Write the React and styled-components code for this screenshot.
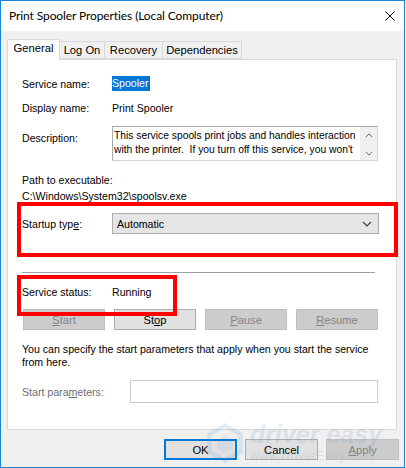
import React from "react";
import styled, { createGlobalStyle } from "styled-components";

const GlobalStyle = createGlobalStyle`
  html, body {
    margin: 0;
    padding: 0;
    background: #ffffff;
  }
  * {
    box-sizing: border-box;
  }
`;

const Window = styled.div`
  position: relative;
  width: 405px;
  height: 468px;
  border: 1px solid #1883d7;
  background: #f0f0f0;
  display: flex;
  flex-direction: column;
  font-family: "Liberation Sans", Arial, sans-serif;
  font-size: 10.6px;
  color: #000;
  overflow: hidden;
`;

const TitleBar = styled.div`
  height: 30px;
  background: #ffffff;
  display: flex;
  align-items: center;
  justify-content: space-between;
  padding: 0 9px 0 8px;
`;

const Title = styled.div`
  font-family: Lato, "Noto Sans", sans-serif;
  font-size: 12px;
  letter-spacing: -0.1px;
  color: #000;
  margin-top: -1px;
`;

const CloseIcon = styled.svg`
  width: 10px;
  height: 10px;
`;

const Body = styled.div`
  flex: 1;
  display: flex;
  flex-direction: column;
  padding: 7px 6px 0 6px;
`;

const TabStrip = styled.div`
  display: flex;
  align-items: flex-end;
  height: 21px;
  position: relative;
  z-index: 1;
`;

const Tab = styled.div`
  height: ${(p) => (p.$active ? "21px" : "18px")};
  width: ${(p) => p.$w}px;
  background: ${(p) => (p.$active ? "#ffffff" : "#f0f0f0")};
  border: 1px solid #d9d9d9;
  border-bottom: ${(p) => (p.$active ? "none" : "1px solid #d9d9d9")};
  border-left: ${(p) => (p.$first ? "1px solid #d9d9d9" : "none")};
  display: flex;
  align-items: center;
  justify-content: center;
  padding-bottom: ${(p) => (p.$active ? "4px" : "0")};
  margin-bottom: ${(p) => (p.$active ? "-1px" : "0")};
  font-size: 11.2px;
  white-space: nowrap;
`;

const Panel = styled.div`
  width: 390px;
  height: 371px;
  background: #ffffff;
  border: 1px solid #d9d9d9;
  display: flex;
  flex-direction: column;
  padding: 0 0 0 14px;
`;

const Row = styled.div`
  display: flex;
  align-items: ${(p) => (p.$top ? "flex-start" : "center")};
  margin-top: ${(p) => p.$mt || 0}px;
  min-height: 14px;
  line-height: 14px;
`;

const Label = styled.div`
  flex: none;
  width: ${(p) => p.$w || 90}px;
  color: ${(p) => (p.$muted ? "#6d6d6d" : "#000")};
  margin-top: ${(p) => p.$mt || 0}px;
`;

const Selected = styled.span`
  background: #0078d7;
  color: #fff;
  padding: 0 1px 0 0;
  line-height: 15px;
`;

const TextArea = styled.div`
  width: 266px;
  height: 35px;
  border: 1px solid #a9a9a9;
  border-right-color: #d4d4d4;
  border-bottom-color: #d4d4d4;
  display: flex;
  line-height: 13.5px;
`;

const TextAreaBody = styled.div`
  flex: 1;
  padding: 2px 0 0 1px;
  overflow: hidden;
  white-space: nowrap;
  font-size: 10.3px;
`;

const ScrollBar = styled.div`
  width: 17px;
  background: #f0f0f0;
  display: flex;
  flex-direction: column;
  justify-content: space-between;
  align-items: center;
  padding: 6px 0 4px;
`;

const Plain = styled.div`
  line-height: 14px;
  margin-top: ${(p) => p.$mt || 0}px;
`;

const Highlight = styled.div`
  position: relative;
  margin-top: ${(p) => p.$mt || 0}px;
  &::after {
    content: "";
    position: absolute;
    top: ${(p) => p.$t}px;
    left: ${(p) => p.$l}px;
    width: ${(p) => p.$w}px;
    height: ${(p) => p.$h}px;
    border: 4px solid #ff0000;
    pointer-events: none;
  }
`;

const Combo = styled.div`
  width: 267px;
  height: 21px;
  background: #e5e5e5;
  border: 1px solid #adadad;
  display: flex;
  align-items: center;
  justify-content: space-between;
  padding: 0 6px 0 4px;
`;

const Separator = styled.div`
  height: 1px;
  width: 353px;
  background: #a0a0a0;
  margin-top: ${(p) => p.$mt}px;
`;

const ButtonRow = styled.div`
  display: flex;
  gap: 9px;
  margin-top: ${(p) => p.$mt || 0}px;
  padding-left: 1px;
`;

const Btn = styled.div`
  width: ${(p) => p.$w || 82}px;
  height: 21px;
  display: flex;
  align-items: center;
  justify-content: center;
  background: ${(p) => (p.$disabled ? "#cccccc" : "#e1e1e1")};
  border: ${(p) =>
    p.$default ? "2px solid #0078d7" : p.$disabled ? "1px solid #bfbfbf" : "1px solid #adadad"};
  color: ${(p) => (p.$disabled ? "#838383" : "#000")};
  font-size: 11.2px;
  u {
    text-decoration: underline;
    text-underline-offset: 1px;
  }
`;

const HelpText = styled.div`
  line-height: 13px;
  width: 360px;
  margin-top: ${(p) => p.$mt}px;
`;

const Input = styled.div`
  width: 248px;
  height: 23px;
  border: 1px solid #cccccc;
  background: #fff;
`;

const Footer = styled.div`
  display: flex;
  justify-content: flex-end;
  gap: 8px;
  margin-top: 9px;
  width: 392px;
`;

const Watermark = styled.div`
  position: absolute;
  left: 204px;
  top: 421px;
  display: flex;
  align-items: flex-start;
  gap: 5px;
  opacity: 0.16;
  pointer-events: none;
`;

const WaterText = styled.div`
  display: flex;
  flex-direction: column;
  line-height: 1;
`;

const WaterBig = styled.div`
  font-family: "Liberation Sans", Arial, sans-serif;
  font-style: italic;
  font-weight: bold;
  font-size: 25px;
  color: #6a94b8;
  white-space: nowrap;
`;

const WaterSmall = styled.div`
  font-family: "Liberation Sans", Arial, sans-serif;
  font-size: 12.5px;
  letter-spacing: 0.3px;
  color: #6a94b8;
  margin-top: 3px;
  white-space: nowrap;
`;

const Chevron = ({ dir = "down", size = 9, color = "#505050" }) => (
  <svg width={size} height={Math.ceil(size / 2) + 1} viewBox="0 0 10 6">
    <path
      d={dir === "down" ? "M1 1 L5 5 L9 1" : "M1 5 L5 1 L9 5"}
      fill="none"
      stroke={color}
      strokeWidth="1.2"
    />
  </svg>
);

export default function App() {
  return (
    <>
      <GlobalStyle />
      <Window>
        <TitleBar>
          <Title>Print Spooler Properties (Local Computer)</Title>
          <CloseIcon viewBox="0 0 10 10">
            <path d="M0.5 0.5 L9.5 9.5 M9.5 0.5 L0.5 9.5" stroke="#000" strokeWidth="1" />
          </CloseIcon>
        </TitleBar>
        <Body>
          <TabStrip>
            <Tab $active $first $w={53}>General</Tab>
            <Tab $w={45}>Log On</Tab>
            <Tab $w={58}>Recovery</Tab>
            <Tab $w={79}>Dependencies</Tab>
          </TabStrip>
          <Panel>
            <Row $mt={16}>
              <Label>Service name:</Label>
              <Selected>Spooler</Selected>
            </Row>
            <Row $mt={10}>
              <Label>Display name:</Label>
              <span>Print Spooler</span>
            </Row>
            <Row $mt={11} $top>
              <Label $mt={5}>Description:</Label>
              <TextArea>
                <TextAreaBody>
                  This service spools print jobs and handles interaction
                  <br />
                  with the printer.&nbsp; If you turn off this service, you won't
                </TextAreaBody>
                <ScrollBar>
                  <Chevron dir="up" size={8} color="#606060" />
                  <Chevron dir="down" size={8} color="#606060" />
                </ScrollBar>
              </TextArea>
            </Row>
            <Plain $mt={12}>Path to executable:</Plain>
            <Plain $mt={2}>C:\Windows\System32\spoolsv.exe</Plain>
            <Highlight $t={-11} $l={-5} $w={373} $h={47} $mt={10}>
              <Row>
                <Label>
                  Startup typ<u>e</u>:
                </Label>
                <Combo>
                  <span>Automatic</span>
                  <Chevron dir="down" size={10} color="#404040" />
                </Combo>
              </Row>
            </Highlight>
            <Separator $mt={38} />
            <Highlight $t={-10} $l={-5} $w={152} $h={33} $mt={12}>
              <Row>
                <Label>Service status:</Label>
                <span>Running</span>
              </Row>
            </Highlight>
            <ButtonRow $mt={10}>
              <Btn $disabled>
                <span><u>S</u>tart</span>
              </Btn>
              <Btn>
                <span>St<u>o</u>p</span>
              </Btn>
              <Btn $disabled>
                <span><u>P</u>ause</span>
              </Btn>
              <Btn $disabled>
                <span><u>R</u>esume</span>
              </Btn>
            </ButtonRow>
            <HelpText $mt={13}>
              You can specify the start parameters that apply when you start the service from here.
            </HelpText>
            <Row $mt={11}>
              <Label $muted $w={108}>
                Start para<u>m</u>eters:
              </Label>
              <Input />
            </Row>
          </Panel>
          <Footer>
            <Btn $w={73} $default>OK</Btn>
            <Btn $w={73}>Cancel</Btn>
            <Btn $w={73} $disabled>
              <span><u>A</u>pply</span>
            </Btn>
          </Footer>
        </Body>
        <Watermark>
          <svg width="40" height="42" viewBox="0 0 46 46">
            <path d="M23 3 L41 13 L41 33 L23 43 L5 33 L5 13 Z" fill="none" stroke="#4a9ad8" strokeWidth="5" />
            <path d="M23 14 L32 19 L32 29 L23 34 L14 29 L14 19 Z" fill="#4a9ad8" opacity="0.6" />
          </svg>
          <WaterText>
            <WaterBig>driver easy</WaterBig>
            <WaterSmall>www.DriverEasy.com</WaterSmall>
          </WaterText>
        </Watermark>
      </Window>
    </>
  );
}
